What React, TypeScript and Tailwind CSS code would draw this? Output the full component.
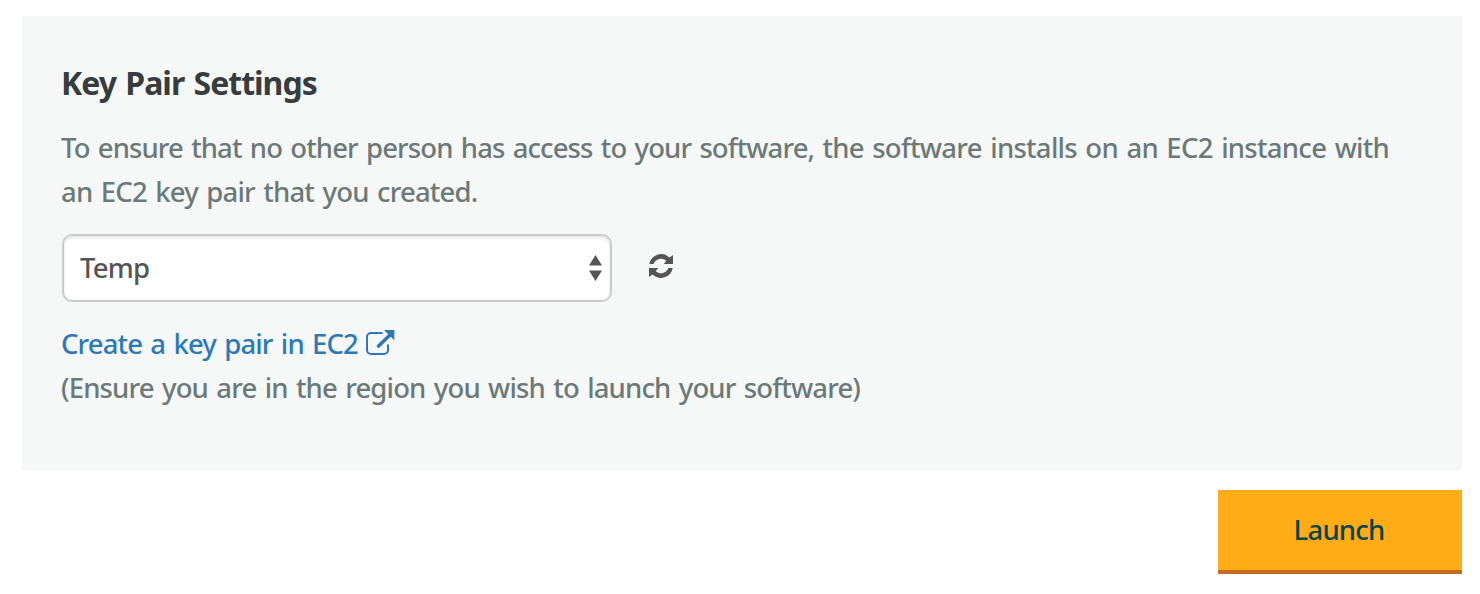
function ExternalLinkIcon() {
  return (
    <svg className="ml-[7px] h-[25px] w-[29px] shrink-0" viewBox="0 0 29 25" fill="none">
      <path d="M16.500 3H5A4 4 0 0 0 1 7V20A4 4 0 0 0 5 24H18A4 4 0 0 0 22 20V14.500" stroke="currentColor" strokeWidth="2" />
      <path d="M12.500 16L24 5" stroke="currentColor" strokeWidth="3.600" strokeLinecap="round" />
      <path d="M18 0H28.300V10.300Z" fill="currentColor" />
    </svg>
  );
}

function RefreshIcon() {
  const half = "M0.300 10A12 12 0 0 1 20.500 3.500L24 1V10H14.800L17.300 6.800A8 8 0 0 0 4.600 10Z";
  return (
    <svg className="size-6" viewBox="0 0 24 24" fill="currentColor">
      <path d={half} />
      <path d={half} transform="rotate(180 12 12)" />
    </svg>
  );
}

export default function App() {
  return (
    <main className="flex h-[594px] w-[1480px] flex-col bg-white pt-4 pr-[18px] pl-[22px] font-['Noto_Sans',sans-serif] text-[27.5px] font-medium whitespace-nowrap">
      <section className="h-[454px] bg-[#f6f8f7] pt-[44px] pl-[39px] leading-[44px] text-[#6b7a79] [word-spacing:2px]">
        <h2 className="pt-px text-[32px] font-bold tracking-[-1px] text-[#373d3f]">Key Pair Settings</h2>
        <p className="mt-[21px] tracking-[-0.8px]">
          <span className="tracking-[-0.9px]">To ensure that no other person has access to your software, </span>
          <span className="tracking-[-0.72px]">the software installs on an EC2 instance with</span>
          <br />
          an EC2 key pair that you created.
        </p>
        <div className="mt-5 ml-px flex items-center">
          <button className="flex h-[68px] w-[550px] items-center justify-between rounded-[10px] border-2 border-[#cacccb] bg-white pr-[7px] pl-4 text-[#555] shadow-[inset_0_2px_3px_rgba(0,0,0,0.1)]">
            <span className="tracking-[-0.8px]">Temp</span>
            <svg className="h-[26px] w-[14px]" viewBox="0 0 14 26" fill="currentColor">
              <path d="M6.500 0L13 10.500H0ZM0 15.500H13L6.500 26Z" />
            </svg>
          </button>
          <button className="mb-1 ml-[37px] text-[#555]" aria-label="Refresh key pairs">
            <RefreshIcon />
          </button>
        </div>
        <a href="#" className="mt-5 flex h-[44px] w-fit items-center text-[#2d78b8]">
          <span className="w-[298px] tracking-[-0.88px]">Create a key pair in EC2</span>
          <span className="mb-1 flex"><ExternalLinkIcon /></span>
        </a>
        <p className="tracking-[-0.85px]">(Ensure you are in the region you wish to launch your software)</p>
      </section>
      <button className="mt-5 h-[84px] w-[244px] self-end border-b-4 border-[#c76b23] bg-[#ffac17] pr-0.5 text-[#08464b]">
        <span className="tracking-[-0.8px]">Launch</span>
      </button>
    </main>
  );
}
